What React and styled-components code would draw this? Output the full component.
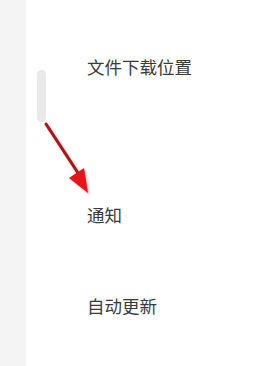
import styled, { createGlobalStyle } from 'styled-components';

const GlobalStyle = createGlobalStyle`
  html, body {
    margin: 0;
    padding: 0;
    background: #fff;
  }
`;

const Page = styled.div`
  position: relative;
  display: flex;
  width: 262px;
  height: 366px;
  overflow: hidden;
  background-color: #fff;
  font-family: "Noto Sans CJK SC", "Noto Sans", sans-serif;
`;

const Sidebar = styled.div`
  width: 26px;
  flex-shrink: 0;
  background-color: #f4f4f4;
`;

const Track = styled.div`
  width: 61px;
  flex-shrink: 0;
  padding: 70px 0 0 11px;
  box-sizing: border-box;
`;

const Thumb = styled.div`
  width: 9px;
  height: 52px;
  border-radius: 5px;
  background-color: #e9e9e9;
`;

const Content = styled.div`
  display: flex;
  flex-direction: column;
  padding-top: 55px;
`;

const Item = styled.div`
  font-size: 17.5px;
  line-height: 24px;
  color: #3a3a3a;
  margin-bottom: ${props => props.gap}px;
`;

const Arrow = styled.svg`
  position: absolute;
  left: 40px;
  top: 118px;
`;

const App = () => {
  return (
    <Page>
      <GlobalStyle />
      <Sidebar />
      <Track>
        <Thumb />
      </Track>
      <Content>
        <Item gap={124}>文件下载位置</Item>
        <Item gap={67}>通知</Item>
        <Item gap={0}>自动更新</Item>
      </Content>
      <Arrow width="60" height="80" viewBox="0 0 60 80">
        <defs>
          <filter id="sh" x="-20%" y="-20%" width="140%" height="140%">
            <feGaussianBlur stdDeviation="0.8" />
          </filter>
        </defs>
        <g filter="url(#sh)" opacity="0.35" transform="translate(1.5,1.5)">
          <line x1="6" y1="6" x2="40" y2="58" stroke="#800" strokeWidth="3" />
          <polygon points="48,75 29,60 44,50" fill="#800" />
        </g>
        <line x1="6" y1="6" x2="40" y2="58" stroke="#a8151b" strokeWidth="3" strokeLinecap="round" />
        <polygon points="48,75 29,60 44,50" fill="#e3141a" />
      </Arrow>
    </Page>
  );
};

export default App;
